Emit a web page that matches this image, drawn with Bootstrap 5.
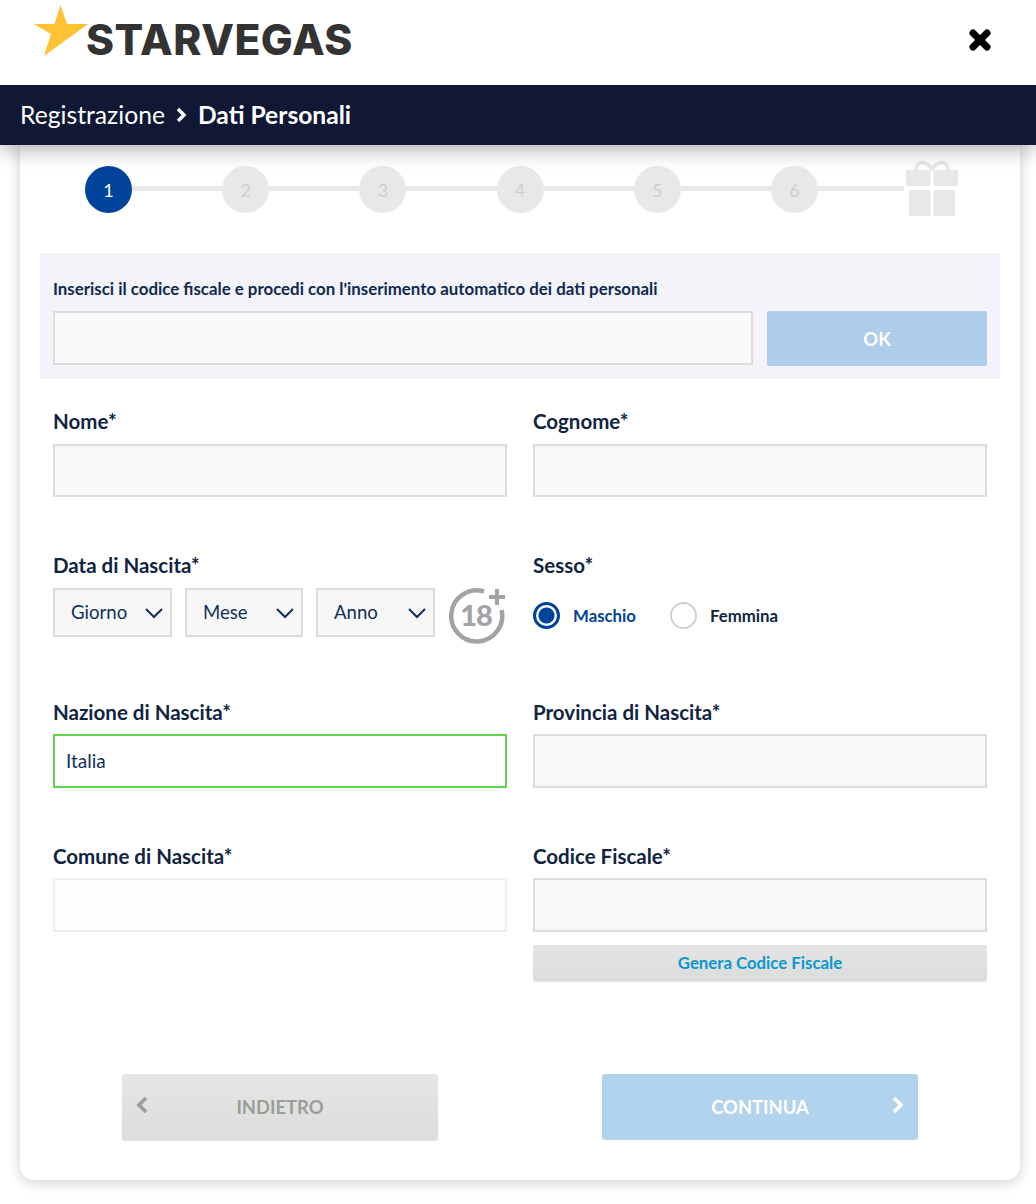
<!doctype html>
<html lang="it">
<head>
<meta charset="utf-8">
<title>Registrazione</title>
<link href="https://cdn.jsdelivr.net/npm/bootstrap@5.3.0/dist/css/bootstrap.min.css" rel="stylesheet">
<style>
html,body{height:1204px;overflow:hidden}
body{font-family:Lato,"Liberation Sans",sans-serif;background:#fff;color:#10243f}
.top-head{height:85px;padding:0 45px 0 34px;background:#fff;position:relative;z-index:3}
.logo-word{font-family:Inter,"Liberation Sans",sans-serif;font-weight:800;font-size:42.5px;line-height:1;color:#333;letter-spacing:.55px;margin-left:-1px;margin-top:19px}
.logo-star{margin-top:5px;margin-bottom:auto;margin-right:-1px}
.close-ico{margin-top:29px}
.crumb-bar{height:60px;background:#101835;color:#fff;font-size:24.7px;padding-left:20px;box-shadow:0 3px 22px rgba(0,0,0,.36);position:relative;z-index:2;gap:11px}
.crumb-bar strong{font-weight:700;font-size:24.6px}
.form-sheet{margin:0 16px 0 20px;height:1035px;background:#fff;border-radius:0 0 14px 14px;box-shadow:0 2px 14px rgba(0,0,0,.2);padding:0 33px;position:relative}
.stepper{padding:15px 0 0 32px;margin-right:-4px;height:108px;align-items:flex-start}
.step-dot{width:47px;height:47px;flex:none;border-radius:50%;background:#e8e8e8;color:#cfcfcf;font-size:18px;margin-top:6px;padding-top:1px}
.step-dot.on{background:#00439b;color:#fff}
.step-line{flex:none;width:90.2px;height:5px;background:#e8e8e8;margin-top:26px}
.step-line.end{width:86px}
.gift-ico{margin-left:2px}
.cf-panel{margin:0 -13px;height:126px;background:#f3f3f9;padding:26px 13px 0}
.cf-panel label{display:block;font-weight:700;font-size:16.85px;line-height:20px;margin-bottom:12px;color:#0f2a4e}
.cf-panel .form-control{width:700px;flex:none}
.btn.btn-ok:disabled{width:220px;height:55px;background:#aecdea;border:0;color:#fff;font-weight:700;font-size:18.400px;border-radius:2px;opacity:1;padding:2px 0 0}
.field-text,.form-control.field-text{height:54px;border:2px solid #dcdcdc;border-radius:0;background:#fafafa;font-size:19px;color:#10305a;padding:0 11px 1px;box-shadow:none}
.form-control.field-text.ok-state{border-color:#5fd04f;background:#fff}
.form-control.field-text.soft{border-color:#eeeeee;background:#fdfdfd}
.f-label{display:block;font-weight:700;font-size:20.5px;line-height:24px;margin-bottom:10px;color:#10243f}
.row.form-line{--bs-gutter-x:26px}
.line-a{height:144px}
.line-b{height:147px}
.line-c{height:144px}
.line-first{margin-top:30px}
.line-a .f-label,.line-b .f-label{margin-bottom:11px}
.line-a .form-control.field-text{height:53px}
.date-pick{gap:13px}
.date-pick .form-select{height:49px;border:2px solid #dcdcdc;border-radius:0;background-color:#f7f7f7;font-size:18.6px;color:#10305a;padding:0 0 0 16px;background-position:right 6px center;background-size:20px 12px;background-image:url("data:image/svg+xml,%3csvg xmlns='http://www.w3.org/2000/svg' viewBox='0 0 20 12'%3e%3cpath fill='none' stroke='%2310305a' stroke-width='2' d='M2 2l8 8 8-8'/%3e%3c/svg%3e")}
.pick-d{width:119px;flex:none}.pick-m{width:118px;flex:none}
.age-ico{margin-left:1px;flex:none}
.sex-row{padding-top:3px;height:52px}
.sex-row .form-check-input{width:27px;height:27px;margin:0;border:2px solid #cfcfcf;flex:none;background:#fff}
.sex-row .form-check-input:checked{border:3px solid #00439b;background:radial-gradient(circle,#00439b 0 7.5px,#fff 8.5px);box-shadow:none}
.sex-row label{font-weight:700;font-size:16.8px;margin-left:13px;margin-right:33px}
.sex-row label.sel{color:#00439b;margin-right:34px}
.btn-gen{display:block;width:100%;height:36px;margin-top:13px;border:0;border-radius:2px;background:linear-gradient(#e4e4e4,#dbdddb);box-shadow:0 1px 1px rgba(0,0,0,.12);color:#0b97cf;font-weight:700;font-size:16.8px;padding:0}
.btn-step,.btn.btn-step:disabled{width:316px;height:66px;border:0;border-radius:3px;font-weight:700;font-size:18.400px;position:relative;opacity:1;padding:2px 0 0}
.btn.btn-prev:disabled{margin-left:69px;background:linear-gradient(#e5e5e5,#dcdedb);color:#999e98;box-shadow:0 1px 1px rgba(0,0,0,.12)}
.btn.btn-next:disabled{margin-right:69px;background:#b2d3ee;color:#fff}
.btn-step svg{position:absolute;top:22px}
.btn-prev svg{left:14px}
.btn-next svg{right:14px}
.nav-zone{margin-top:93px}
</style>
</head>
<body>
<header class="top-head d-flex align-items-start justify-content-between">
  <a class="d-flex text-decoration-none" href="#">
    <svg class="logo-star" width="54" height="52" viewBox="0 0 54 52" aria-hidden="true"><path fill="#fec233" d="M26.500 0L33 19H54L10 51L17 29L0 19H20.500Z"/></svg>
    <span class="logo-word">STARVEGAS</span>
  </a>
  <svg class="close-ico" width="22" height="22" viewBox="0 0 22 22" aria-label="Chiudi"><path stroke="#000" stroke-width="7" stroke-linecap="round" d="M4 4L18 18M18 4L4 18"/></svg>
</header>
<div class="crumb-bar d-flex align-items-center">
  <span>Registrazione</span>
  <svg width="11" height="16" viewBox="0 0 11 16" aria-hidden="true"><path fill="none" stroke="#fff" stroke-width="3.400" d="M2 2l6 6-6 6"/></svg>
  <strong>Dati Personali</strong>
</div>
<main class="form-sheet">
  <div class="stepper d-flex">
    <div class="step-dot on d-flex align-items-center justify-content-center">1</div><div class="step-line"></div>
    <div class="step-dot d-flex align-items-center justify-content-center">2</div><div class="step-line"></div>
    <div class="step-dot d-flex align-items-center justify-content-center">3</div><div class="step-line"></div>
    <div class="step-dot d-flex align-items-center justify-content-center">4</div><div class="step-line"></div>
    <div class="step-dot d-flex align-items-center justify-content-center">5</div><div class="step-line"></div>
    <div class="step-dot d-flex align-items-center justify-content-center">6</div><div class="step-line end"></div>
    <svg class="gift-ico" width="52" height="57" viewBox="0 0 52 57" aria-hidden="true"><path fill="#e8e8e8" d="M0 10h24.500v16H0zM27.500 10H52v16H27.500zM3 30h21.500v26H3zM27.500 30H49v26H27.500z"/><path fill="none" stroke="#e8e8e8" stroke-width="3.500" d="M10.500 10C9 2 19 -1 26 9C33 -1 43 2 41.500 10"/></svg>
  </div>
  <section class="cf-panel">
    <label for="cf0">Inserisci il codice fiscale e procedi con l'inserimento automatico dei dati personali</label>
    <div class="d-flex justify-content-between">
      <input id="cf0" class="form-control field-text" type="text">
      <button class="btn btn-ok" type="button" disabled>OK</button>
    </div>
  </section>
  <div class="row form-line line-a line-first">
    <div class="col-6"><label class="f-label" for="n1">Nome*</label><input id="n1" class="form-control field-text" type="text"></div>
    <div class="col-6"><label class="f-label" for="n2">Cognome*</label><input id="n2" class="form-control field-text" type="text"></div>
  </div>
  <div class="row form-line line-b">
    <div class="col-6">
      <span class="f-label">Data di Nascita*</span>
      <div class="d-flex date-pick align-items-start">
        <select class="form-select pick-d"><option>Giorno</option></select>
        <select class="form-select pick-m"><option>Mese</option></select>
        <select class="form-select pick-d"><option>Anno</option></select>
        <svg class="age-ico" width="56" height="56" viewBox="0 0 56 56" aria-hidden="true">
          <path fill="none" stroke="#a3a3a3" stroke-width="4.500" d="M35 3.500A25.500 25.500 0 1 0 52.500 22"/>
          <path fill="#a3a3a3" d="M46 1h4v6h6v4h-6v6h-4v-6h-6V7h6z"/>
          <text x="27" y="38" text-anchor="middle" font-family="Lato,sans-serif" font-weight="900" font-size="29" letter-spacing="-1" fill="#a3a3a3">18</text>
        </svg>
      </div>
    </div>
    <div class="col-6">
      <span class="f-label">Sesso*</span>
      <div class="d-flex align-items-center sex-row">
        <input id="sm" class="form-check-input" type="radio" name="sx" checked><label class="sel" for="sm">Maschio</label>
        <input id="sf" class="form-check-input" type="radio" name="sx"><label for="sf">Femmina</label>
      </div>
    </div>
  </div>
  <div class="row form-line line-c">
    <div class="col-6"><label class="f-label" for="n3">Nazione di Nascita*</label><input id="n3" class="form-control field-text ok-state" type="text" value="Italia"></div>
    <div class="col-6"><label class="f-label" for="n4">Provincia di Nascita*</label><input id="n4" class="form-control field-text" type="text"></div>
  </div>
  <div class="row form-line">
    <div class="col-6"><label class="f-label" for="n5">Comune di Nascita*</label><input id="n5" class="form-control field-text soft" type="text"></div>
    <div class="col-6"><label class="f-label" for="n6">Codice Fiscale*</label><input id="n6" class="form-control field-text" type="text">
      <button class="btn-gen" type="button">Genera Codice Fiscale</button></div>
  </div>
  <div class="d-flex justify-content-between nav-zone">
    <button class="btn btn-step btn-prev" type="button" disabled>
      <svg width="14" height="18" viewBox="0 0 14 18" aria-hidden="true"><path fill="none" stroke="#999e98" stroke-width="3.600" d="M10 2L3 9l7 7"/></svg>INDIETRO</button>
    <button class="btn btn-step btn-next" type="button" disabled>CONTINUA
      <svg width="14" height="18" viewBox="0 0 14 18" aria-hidden="true"><path fill="none" stroke="#fff" stroke-width="3.600" d="M4 2l7 7-7 7"/></svg></button>
  </div>
</main>
<script src="https://cdn.jsdelivr.net/npm/bootstrap@5.3.0/dist/js/bootstrap.bundle.min.js"></script>
</body>
</html>
